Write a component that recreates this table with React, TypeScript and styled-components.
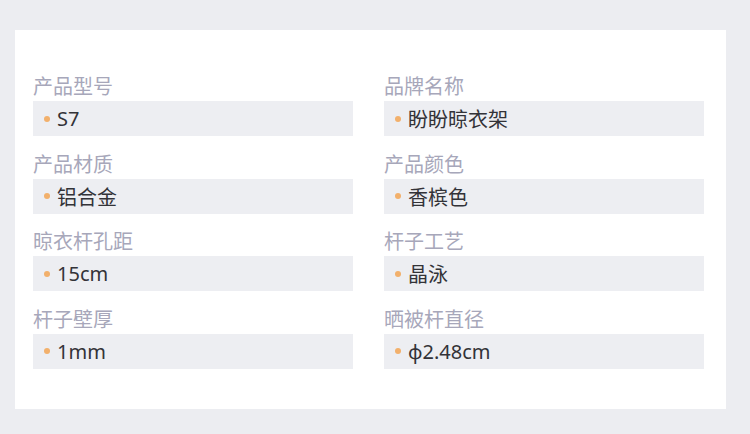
import styled, { createGlobalStyle } from "styled-components";

const GlobalStyle = createGlobalStyle`
	html, body {
		margin: 0;
		padding: 0;
		background: #ecedf1;
	}
	body {
		font-family: "Noto Sans", "Noto Sans CJK SC", sans-serif;
	}
`;

const Page = styled.div`
	padding: 30px 24px 26px 15px;
	border-top: 2px solid #f3f3f6;
	margin-top: -2px;
`;

const Card = styled.div`
	background: #fff;
	width: 711px;
	box-sizing: border-box;
	padding: 44px 22px 40px 18px;
	display: grid;
	grid-template-columns: 320px 320px;
	column-gap: 31px;
	row-gap: 15.5px;
`;

const Item = styled.div`
	display: flex;
	flex-direction: column;
	gap: 4px;
`;

const Label = styled.div`
	font-family: "Noto Sans CJK SC", sans-serif;
	font-size: 20px;
	line-height: 23px;
	height: 23px;
	color: #a7a7ba;
`;

const Value = styled.div`
	height: 35px;
	background: #edeef2;
	display: flex;
	align-items: center;
	padding-left: 11px;
	gap: 7px;
	font-family: "Noto Sans", "Noto Sans CJK SC", sans-serif;
	font-size: 20px;
	color: #333338;
`;

const Dot = styled.span`
	width: 6px;
	height: 6px;
	border-radius: 50%;
	background: #f2b06c;
	flex: none;
`;

interface Spec {
	label: string;
	value: string;
}

const specs: Spec[] = [
	{ label: "产品型号", value: "S7" },
	{ label: "品牌名称", value: "盼盼晾衣架" },
	{ label: "产品材质", value: "铝合金" },
	{ label: "产品颜色", value: "香槟色" },
	{ label: "晾衣杆孔距", value: "15cm" },
	{ label: "杆子工艺", value: "晶泳" },
	{ label: "杆子壁厚", value: "1mm" },
	{ label: "晒被杆直径", value: "ϕ2.48cm" },
];

const App = () => {
	return (
		<>
			<GlobalStyle />
			<Page>
				<Card>
					{specs.map((item) => (
						<Item key={item.label}>
							<Label>{item.label}</Label>
							<Value>
								<Dot />
								<span>{item.value}</span>
							</Value>
						</Item>
					))}
				</Card>
			</Page>
		</>
	);
};

export default App;
